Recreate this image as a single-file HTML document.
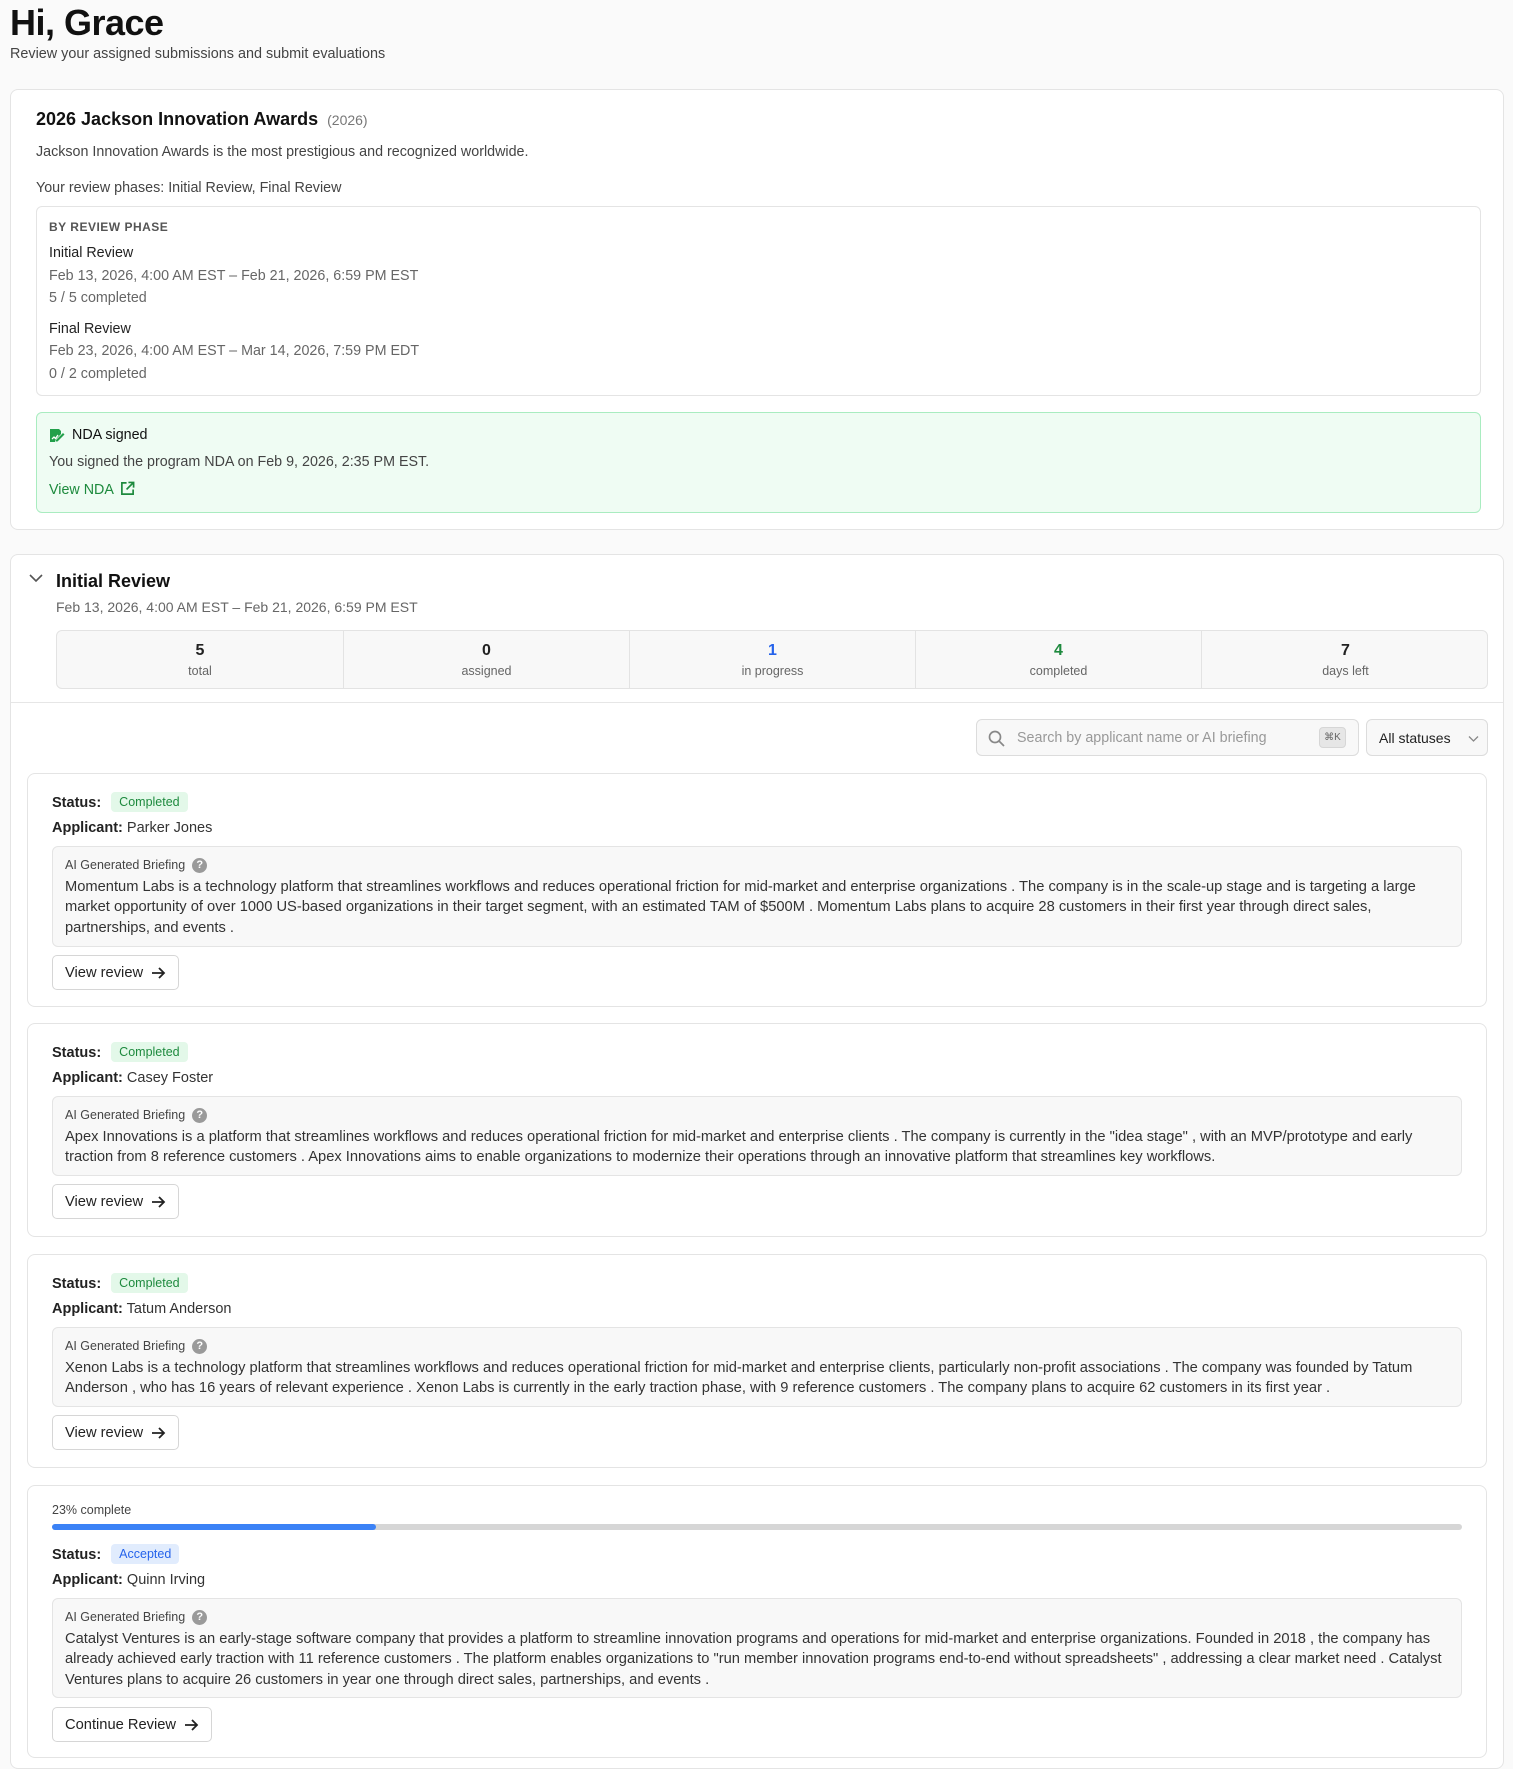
<!DOCTYPE html>
<html><head><meta charset="utf-8"><style>
*{box-sizing:border-box;margin:0;padding:0}
body{width:1513px;height:1766px;overflow:hidden;background:#fafafa;font-family:"Liberation Sans",Arial,sans-serif;color:#222;position:relative}
.abs{position:absolute}
h1{position:absolute;left:10px;top:2px;font-size:36px;font-weight:700;letter-spacing:-0.5px;color:#111}
.sub{left:10px;top:46px;font-size:14.4px;color:#444}
.card{position:absolute;background:#fff;border:1px solid #e4e4e4;border-radius:8px}
.muted{color:#666}
.t14{font-size:14.3px}
.stat{position:absolute;top:0;height:100%;text-align:center;border-right:1px solid #e3e3e3}
.stat b{display:block;font-size:16px;margin-top:11px;color:#222}
.stat span{display:block;font-size:12.5px;color:#666;margin-top:4px}
.item{position:absolute;left:27px;width:1460px;background:#fff;border:1px solid #e4e4e4;border-radius:8px}
.item .st{position:absolute;left:24px;font-size:14.5px;font-weight:700;color:#222}
.badge{display:inline-block;margin-left:6px;padding:3px 8px;border-radius:4px;font-size:12.5px;font-weight:400;vertical-align:1px}
.done{background:#e3f8e9;color:#1e8a3e}
.acc{background:#e1ecfd;color:#2563eb}
.app{position:absolute;left:24px;font-size:14.5px;color:#333}
.app b{color:#222}
.brief{position:absolute;left:24px;width:1410px;background:#f8f8f8;border:1px solid #e4e4e4;border-radius:6px;padding:8px 12px 0 12px}
.brief .lbl{font-size:12.5px;color:#444;height:20px;display:flex;align-items:center}
.q{display:inline-block;width:15px;height:15px;border-radius:50%;background:#9a9a9a;color:#fff;font-size:11px;font-weight:700;text-align:center;line-height:15px;margin-left:7px}
.brief p{font-size:14.7px;line-height:20.3px;color:#333;margin-top:2px}
.btn{position:absolute;left:24px;height:35px;border:1px solid #d6d6d6;border-radius:5px;background:#fff;font-size:14.7px;color:#222;display:flex;align-items:center;padding:0 12px;gap:8px}
</style></head><body>
<h1>Hi, Grace</h1>
<div class="abs sub">Review your assigned submissions and submit evaluations</div>

<div class="card" style="left:10px;top:89px;width:1494px;height:441px">
  <div class="abs" style="left:25px;top:19px;font-size:18px;font-weight:700;color:#111">2026 Jackson Innovation Awards <span style="font-size:14px;color:#777;font-weight:400;margin-left:4px">(2026)</span></div>
  <div class="abs t14" style="left:25px;top:54px;color:#444">Jackson Innovation Awards is the most prestigious and recognized worldwide.</div>
  <div class="abs t14" style="left:25px;top:90px;color:#444">Your review phases: Initial Review, Final Review</div>
  <div class="abs" style="left:25px;top:116px;width:1445px;height:190px;border:1px solid #e4e4e4;border-radius:6px">
    <div class="abs" style="left:12px;top:13px;font-size:12px;font-weight:700;color:#555;letter-spacing:0.5px">BY REVIEW PHASE</div>
    <div class="abs t14" style="left:12px;top:38px;color:#222">Initial Review</div>
    <div class="abs t14 muted" style="left:12px;top:61px">Feb 13, 2026, 4:00 AM EST – Feb 21, 2026, 6:59 PM EST</div>
    <div class="abs t14 muted" style="left:12px;top:83px">5 / 5 completed</div>
    <div class="abs t14" style="left:12px;top:114px;color:#222">Final Review</div>
    <div class="abs t14 muted" style="left:12px;top:136px">Feb 23, 2026, 4:00 AM EST – Mar 14, 2026, 7:59 PM EDT</div>
    <div class="abs t14 muted" style="left:12px;top:159px">0 / 2 completed</div>
  </div>
  <div class="abs" style="left:25px;top:322px;width:1445px;height:101px;border:1px solid #a9ecc0;background:#effcf3;border-radius:6px">
    <svg class="abs" style="left:12px;top:15px" width="16" height="16" viewBox="0 0 16 16"><path d="M1 1h9l2 2v3l-5 5-1 3H1z" fill="#22a04a"/><path d="M7 12l7-7 1.5 1.5-7 7H7z" fill="#22a04a"/><path d="M3 11l2-2 1.5 1.5L9 7" stroke="#fff" stroke-width="1.3" fill="none"/></svg>
    <div class="abs t14" style="left:35px;top:14px;color:#111">NDA signed</div>
    <div class="abs t14" style="left:12px;top:41px;color:#444">You signed the program NDA on Feb 9, 2026, 2:35 PM EST.</div>
    <div class="abs t14" style="left:12px;top:68px;color:#1d8a3d">View NDA
      <svg style="vertical-align:-2px;margin-left:3px" width="15" height="15" viewBox="0 0 16 16" fill="none" stroke="#1d8a3d" stroke-width="1.8"><path d="M7 2H2v12h12V9"/><path d="M9 1.5h5.5V7M14.5 1.5L7 9"/></svg></div>
  </div>
</div>

<div class="card" style="left:10px;top:554px;width:1494px;height:1215px">
  <svg class="abs" style="left:17px;top:18px" width="16" height="12" viewBox="0 0 16 12" fill="none" stroke="#555" stroke-width="1.6"><path d="M2 2l6 6 6-6"/></svg>
  <div class="abs" style="left:45px;top:16px;font-size:18px;font-weight:700;color:#111">Initial Review</div>
  <div class="abs muted" style="left:45px;top:44px;font-size:14px">Feb 13, 2026, 4:00 AM EST – Feb 21, 2026, 6:59 PM EST</div>
  <div class="abs" style="left:45px;top:75px;width:1432px;height:59px;border:1px solid #e3e3e3;border-radius:6px;background:#f8f8f8;overflow:hidden">
    <div class="stat" style="left:0;width:287px"><b>5</b><span>total</span></div>
    <div class="stat" style="left:287px;width:286px"><b>0</b><span>assigned</span></div>
    <div class="stat" style="left:573px;width:286px"><b style="color:#2563eb">1</b><span>in progress</span></div>
    <div class="stat" style="left:859px;width:286px"><b style="color:#1e8a3e">4</b><span>completed</span></div>
    <div class="stat" style="left:1145px;width:287px;border:none"><b>7</b><span>days left</span></div>
  </div>
  <div class="abs" style="left:0;top:147px;width:1492px;height:1px;background:#e6e6e6"></div>
  <div class="abs" style="left:965px;top:164px;width:383px;height:37px;border:1px solid #dcdcdc;border-radius:6px;background:#f8f8f8">
    <svg class="abs" style="left:11px;top:10px" width="17" height="17" viewBox="0 0 17 17" fill="none" stroke="#888" stroke-width="1.7"><circle cx="7" cy="7" r="5.5"/><path d="M11 11l5 5"/></svg>
    <div class="abs" style="left:40px;top:10px;font-size:14.3px;color:#999">Search by applicant name or AI briefing</div>
    <div class="abs" style="left:342px;top:7px;width:27px;height:21px;background:#e6e6e6;border:1px solid #d6d6d6;border-radius:4px;font-size:10px;color:#666;text-align:center;line-height:19px">⌘K</div>
  </div>
  <div class="abs" style="left:1355px;top:164px;width:122px;height:37px;border:1px solid #dcdcdc;border-radius:6px;background:#f8f8f8">
    <div class="abs" style="left:12px;top:10px;font-size:14px;color:#222">All statuses</div>
    <svg class="abs" style="left:101px;top:15px" width="11" height="8" viewBox="0 0 11 8" fill="none" stroke="#888" stroke-width="1.3"><path d="M1 1.5l4.5 4.5 4.5-4.5"/></svg>
  </div>
</div>

<div class="item" style="top:773px;height:234px">
  <div class="st" style="top:18px">Status: <span class="badge done">Completed</span></div>
  <div class="app" style="top:46px"><b>Applicant:</b> Parker Jones</div>
  <div class="brief" style="top:72px;height:101px"><div class="lbl">AI Generated Briefing <span class="q">?</span></div>
  <p>Momentum Labs is a technology platform that streamlines workflows and reduces operational friction for mid-market and enterprise organizations . The company is in the scale-up stage and is targeting a large market opportunity of over 1000 US-based organizations in their target segment, with an estimated TAM of $500M . Momentum Labs plans to acquire 28 customers in their first year through direct sales, partnerships, and events .</p></div>
  <div class="btn" style="top:181px">View review <svg width="15" height="14" viewBox="0 0 15 14" fill="none" stroke="#222" stroke-width="1.8"><path d="M1 7h12M8 2l5 5-5 5"/></svg></div>
</div>

<div class="item" style="top:1023px;height:214px">
  <div class="st" style="top:18px">Status: <span class="badge done">Completed</span></div>
  <div class="app" style="top:46px"><b>Applicant:</b> Casey Foster</div>
  <div class="brief" style="top:72px;height:80px"><div class="lbl">AI Generated Briefing <span class="q">?</span></div>
  <p>Apex Innovations is a platform that streamlines workflows and reduces operational friction for mid-market and enterprise clients . The company is currently in the "idea stage" , with an MVP/prototype and early traction from 8 reference customers . Apex Innovations aims to enable organizations to modernize their operations through an innovative platform that streamlines key workflows.</p></div>
  <div class="btn" style="top:160px">View review <svg width="15" height="14" viewBox="0 0 15 14" fill="none" stroke="#222" stroke-width="1.8"><path d="M1 7h12M8 2l5 5-5 5"/></svg></div>
</div>

<div class="item" style="top:1254px;height:214px">
  <div class="st" style="top:18px">Status: <span class="badge done">Completed</span></div>
  <div class="app" style="top:46px"><b>Applicant:</b> Tatum Anderson</div>
  <div class="brief" style="top:72px;height:80px"><div class="lbl">AI Generated Briefing <span class="q">?</span></div>
  <p>Xenon Labs is a technology platform that streamlines workflows and reduces operational friction for mid-market and enterprise clients, particularly non-profit associations . The company was founded by Tatum Anderson , who has 16 years of relevant experience . Xenon Labs is currently in the early traction phase, with 9 reference customers . The company plans to acquire 62 customers in its first year .</p></div>
  <div class="btn" style="top:160px">View review <svg width="15" height="14" viewBox="0 0 15 14" fill="none" stroke="#222" stroke-width="1.8"><path d="M1 7h12M8 2l5 5-5 5"/></svg></div>
</div>

<div class="item" style="top:1485px;height:273px">
  <div class="abs" style="left:24px;top:17px;font-size:12.5px;color:#444">23% complete</div>
  <div class="abs" style="left:24px;top:38px;width:1410px;height:6px;background:#d6d6d6;border-radius:3px"><div style="width:324px;height:6px;background:#3b82f6;border-radius:3px"></div></div>
  <div class="st" style="top:58px">Status: <span class="badge acc">Accepted</span></div>
  <div class="app" style="top:86px"><b>Applicant:</b> Quinn Irving</div>
  <div class="brief" style="top:112px;height:100px"><div class="lbl">AI Generated Briefing <span class="q">?</span></div>
  <p>Catalyst Ventures is an early-stage software company that provides a platform to streamline innovation programs and operations for mid-market and enterprise organizations. Founded in 2018 , the company has already achieved early traction with 11 reference customers . The platform enables organizations to "run member innovation programs end-to-end without spreadsheets" , addressing a clear market need . Catalyst Ventures plans to acquire 26 customers in year one through direct sales, partnerships, and events .</p></div>
  <div class="btn" style="top:221px">Continue Review <svg width="15" height="14" viewBox="0 0 15 14" fill="none" stroke="#222" stroke-width="1.8"><path d="M1 7h12M8 2l5 5-5 5"/></svg></div>
</div>
</body></html>
